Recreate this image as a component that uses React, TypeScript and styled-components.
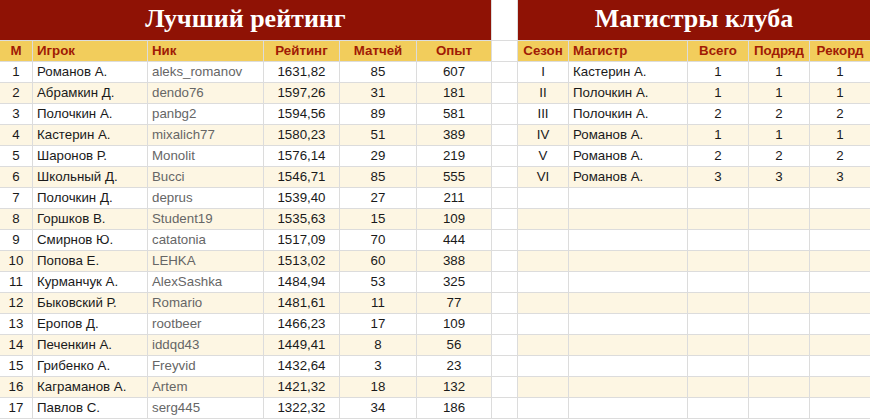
import styled, { createGlobalStyle } from "styled-components";

const GlobalStyle = createGlobalStyle`
  body {
    margin: 0;
    background: #fff;
    font-family: "Liberation Sans", Arial, sans-serif;
  }
`;

type Align = "left" | "center";

const Sheet = styled.div`
  display: grid;
  grid-template-columns: 32px 114px 115px 75px 76px 74px 25px 50px 118px 60px 60px 60px;
  grid-template-rows: 40px 20px;
  grid-auto-rows: 20px;
  gap: 1px;
  background: #dcdcdc;
  width: 870px;
  border-bottom: 1px solid #dcdcdc;
`;

const TitleCell = styled.div<{ $span: number }>`
  grid-column: span ${(p) => p.$span};
  background: #8f1205;
  color: #fff;
  font-family: "Liberation Serif", "DejaVu Serif", serif;
  font-weight: 700;
  font-size: 26px;
  display: flex;
  align-items: center;
  justify-content: center;
  padding-bottom: 2px;
`;

const Blank = styled.div`
  background: #fff;
`;

const HeadCell = styled.div<{ $align?: Align }>`
  background: #f2cd5c;
  color: #a01b05;
  font-weight: 700;
  font-size: 13.3px;
  line-height: 20px;
  padding: 0 4px;
  text-align: ${(p) => p.$align ?? "center"};
  white-space: nowrap;
`;

const Cell = styled.div<{ $align?: Align; $striped: boolean; $muted?: boolean }>`
  background: ${(p) => (p.$striped ? "#fdf6e3" : "#fff")};
  color: ${(p) => (p.$muted ? "#666" : "#1a1a1a")};
  font-size: 13.3px;
  line-height: 20px;
  padding: 0 4px;
  text-align: ${(p) => p.$align ?? "center"};
  white-space: nowrap;
  overflow: hidden;
`;

const players = [
  ["Романов А.", "aleks_romanov", "1631,82", "85", "607"],
  ["Абрамкин Д.", "dendo76", "1597,26", "31", "181"],
  ["Полочкин А.", "panbg2", "1594,56", "89", "581"],
  ["Кастерин А.", "mixalich77", "1580,23", "51", "389"],
  ["Шаронов Р.", "Monolit", "1576,14", "29", "219"],
  ["Школьный Д.", "Bucci", "1546,71", "85", "555"],
  ["Полочкин Д.", "deprus", "1539,40", "27", "211"],
  ["Горшков В.", "Student19", "1535,63", "15", "109"],
  ["Смирнов Ю.", "catatonia", "1517,09", "70", "444"],
  ["Попова Е.", "LEHKA", "1513,02", "60", "388"],
  ["Курманчук А.", "AlexSashka", "1484,94", "53", "325"],
  ["Быковский Р.", "Romario", "1481,61", "11", "77"],
  ["Еропов Д.", "rootbeer", "1466,23", "17", "109"],
  ["Печенкин А.", "iddqd43", "1449,41", "8", "56"],
  ["Грибенко А.", "Freyvid", "1432,64", "3", "23"],
  ["Каграманов А.", "Artem", "1421,32", "18", "132"],
  ["Павлов С.", "serg445", "1322,32", "34", "186"],
];

const masters = [
  ["I", "Кастерин А.", "1", "1", "1"],
  ["II", "Полочкин А.", "1", "1", "1"],
  ["III", "Полочкин А.", "2", "2", "2"],
  ["IV", "Романов А.", "1", "1", "1"],
  ["V", "Романов А.", "2", "2", "2"],
  ["VI", "Романов А.", "3", "3", "3"],
];

export default function App() {
  return (
    <>
      <GlobalStyle />
      <Sheet>
        <TitleCell $span={6}>Лучший рейтинг</TitleCell>
        <Blank />
        <TitleCell $span={5}>Магистры клуба</TitleCell>

        <HeadCell>М</HeadCell>
        <HeadCell $align="left">Игрок</HeadCell>
        <HeadCell $align="left">Ник</HeadCell>
        <HeadCell>Рейтинг</HeadCell>
        <HeadCell>Матчей</HeadCell>
        <HeadCell>Опыт</HeadCell>
        <Blank />
        <HeadCell>Сезон</HeadCell>
        <HeadCell $align="left">Магистр</HeadCell>
        <HeadCell>Всего</HeadCell>
        <HeadCell>Подряд</HeadCell>
        <HeadCell>Рекорд</HeadCell>

        {players.map((p, i) => {
          const striped = i % 2 === 1;
          const m = masters[i] ?? ["", "", "", "", ""];
          return [
            <Cell key={`n${i}`} $striped={striped}>{i + 1}</Cell>,
            <Cell key={`p${i}`} $striped={striped} $align="left">{p[0]}</Cell>,
            <Cell key={`k${i}`} $striped={striped} $align="left" $muted>{p[1]}</Cell>,
            <Cell key={`r${i}`} $striped={striped}>{p[2]}</Cell>,
            <Cell key={`g${i}`} $striped={striped}>{p[3]}</Cell>,
            <Cell key={`e${i}`} $striped={striped}>{p[4]}</Cell>,
            <Blank key={`b${i}`} />,
            <Cell key={`s${i}`} $striped={striped}>{m[0]}</Cell>,
            <Cell key={`m${i}`} $striped={striped} $align="left">{m[1]}</Cell>,
            <Cell key={`t${i}`} $striped={striped}>{m[2]}</Cell>,
            <Cell key={`w${i}`} $striped={striped}>{m[3]}</Cell>,
            <Cell key={`c${i}`} $striped={striped}>{m[4]}</Cell>,
          ];
        })}
      </Sheet>
    </>
  );
}
